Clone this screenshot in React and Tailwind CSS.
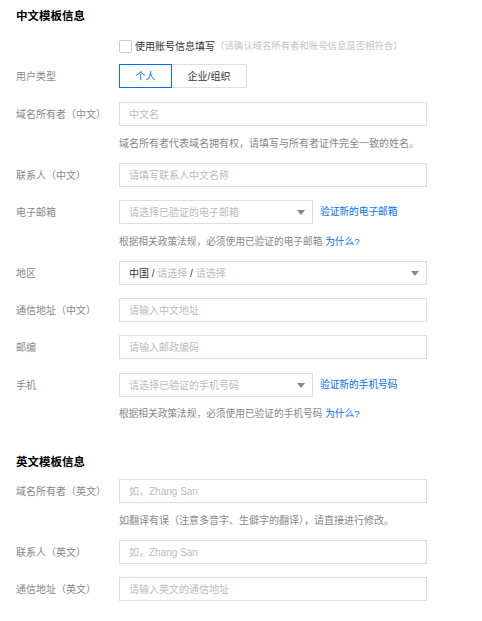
function Caret() {
  return (
    <svg width="8" height="5" viewBox="0 0 8 5" className="shrink-0">
      <path d="M0 0h8L4 5z" fill="#888" />
    </svg>
  )
}

function Label({ children }) {
  return <div className="w-[103px] shrink-0 text-[10px] text-[#888]">{children}</div>
}

function Row({ label, className = "", children }) {
  return (
    <div className={`flex items-center h-[24px] ${className}`}>
      <Label>{label}</Label>
      {children}
    </div>
  )
}

function TextInput({ placeholder }) {
  return (
    <div className="w-[308px] h-[24px] border border-[#dcdfe6] bg-white flex items-center pl-[9px] text-[10px] text-[#bbb]">
      {placeholder}
    </div>
  )
}

function Select({ width, children }) {
  return (
    <div
      className={`${width} h-[24px] border border-[#dcdfe6] bg-white flex items-center justify-between pl-[9px] pr-[7px] text-[10px] text-[#bbb]`}
    >
      <span>{children}</span>
      <Caret />
    </div>
  )
}

function Hint({ className = "", children }) {
  return (
    <div className={`pl-[103px] h-[14px] leading-[14px] text-[#888] ${className}`}>
      {children}
    </div>
  )
}

function Heading({ className = "", children }) {
  return <div className={`h-[20px] leading-[20px] text-[11.5px] font-bold text-[#000] ${className}`}>{children}</div>
}

export default function App() {
  return (
    <div className="w-[482px] min-h-[621px] bg-white pl-[16px] font-['Liberation_Sans','Noto_Sans_CJK_SC',sans-serif]">
      {/* 中文模板 */}
      <Heading className="mt-[6px]">中文模板信息</Heading>

      <div className="flex items-center h-[24px] mt-[8px] pl-[103px]">
        <span className="w-[13px] h-[13px] border border-[#ccc] rounded-[2px] bg-white" />
        <span className="ml-[3px] text-[10px] text-[#333]">使用账号信息填写</span>
        <span className="text-[9.4px] text-[#c4c4c4]">（请确认域名所有者和账号信息是否相符合）</span>
      </div>

      <Row label="用户类型" className="mt-[6px]">
        <div className="flex h-[24px] text-[10px]">
          <div className="w-[53px] border border-[#006eff] text-[#006eff] flex items-center justify-center">个人</div>
          <div className="w-[75px] border border-l-0 border-[#dcdfe6] text-[#333] flex items-center justify-center">企业/组织</div>
        </div>
      </Row>

      <Row label="域名所有者（中文）" className="mt-[14px]">
        <TextInput placeholder="中文名" />
      </Row>
      <Hint className="mt-[11px] text-[10px]">域名所有者代表域名拥有权，请填写与所有者证件完全一致的姓名。</Hint>

      <Row label="联系人（中文）" className="mt-[12px]">
        <TextInput placeholder="请填写联系人中文名称" />
      </Row>

      <Row label="电子邮箱" className="mt-[13px]">
        <Select width="w-[194px]">请选择已验证的电子邮箱</Select>
        <span className="ml-[7px] text-[9.7px] text-[#006eff]">验证新的电子邮箱</span>
      </Row>
      <Hint className="mt-[11px] text-[9.7px]">
        根据相关政策法规，必须使用已验证的电子邮箱 <span className="text-[#006eff]">为什么?</span>
      </Hint>

      <Row label="地区" className="mt-[12px]">
        <div className="w-[308px] h-[24px] border border-[#dcdfe6] bg-white flex items-center justify-between pl-[9px] pr-[7px] text-[10px]">
          <span>
            <span className="text-[#333]">中国 / </span>
            <span className="text-[#bbb]">请选择</span>
            <span className="text-[#333]"> / </span>
            <span className="text-[#bbb]">请选择</span>
          </span>
          <Caret />
        </div>
      </Row>

      <Row label="通信地址（中文）" className="mt-[13px]">
        <TextInput placeholder="请输入中文地址" />
      </Row>

      <Row label="邮编" className="mt-[13px]">
        <TextInput placeholder="请输入邮政编码" />
      </Row>

      <Row label="手机" className="mt-[14px]">
        <Select width="w-[194px]">请选择已验证的手机号码</Select>
        <span className="ml-[7px] text-[9.7px] text-[#006eff]">验证新的手机号码</span>
      </Row>
      <Hint className="mt-[10px] text-[9.7px]">
        根据相关政策法规，必须使用已验证的手机号码 <span className="text-[#006eff]">为什么?</span>
      </Hint>

      {/* 英文模板 */}
      <Heading className="mt-[31px]">英文模板信息</Heading>

      <Row label="域名所有者（英文）" className="mt-[7px]">
        <TextInput placeholder="如，Zhang San" />
      </Row>
      <Hint className="mt-[11px] text-[10px]">如翻译有误（注意多音字、生僻字的翻译），请直接进行修改。</Hint>

      <Row label="联系人（英文）" className="mt-[12px]">
        <TextInput placeholder="如，Zhang San" />
      </Row>

      <Row label="通信地址（英文）" className="mt-[13px]">
        <TextInput placeholder="请输入英文的通信地址" />
      </Row>
    </div>
  )
}
